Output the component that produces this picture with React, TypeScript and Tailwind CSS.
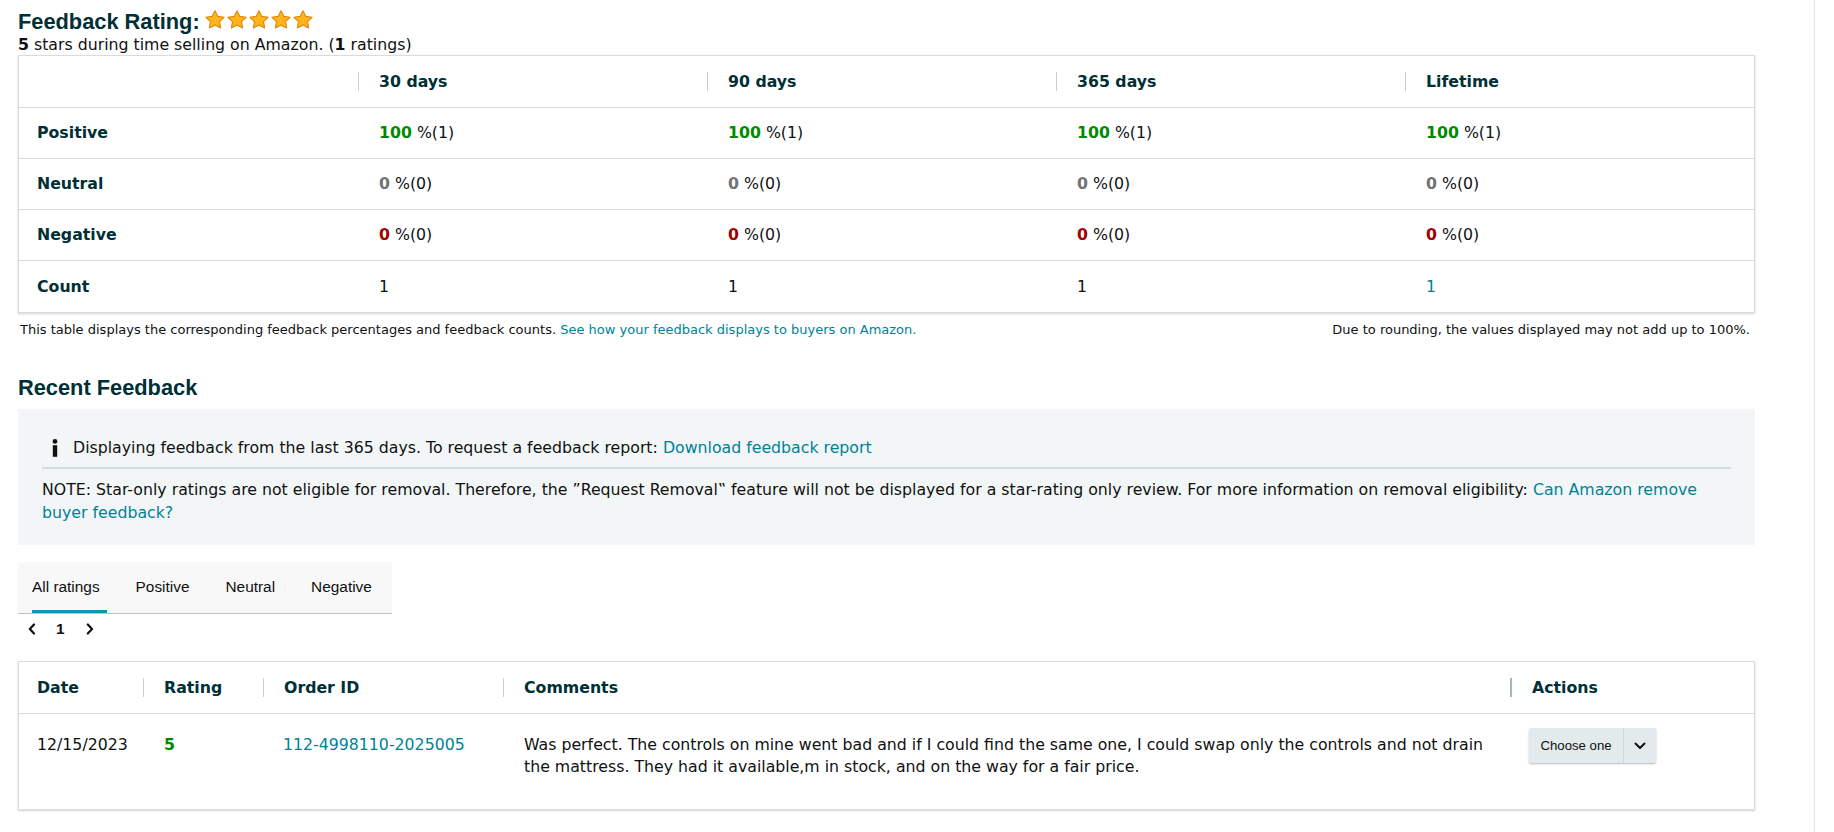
import React from "react";

const VERDANA = "font-['DejaVu_Sans','Verdana',sans-serif]";
const ARIAL = "font-['Liberation_Sans','Arial',sans-serif]";

function Star() {
  return (
    <svg width="20" height="19" viewBox="1 1.2 22 21" className="block">
      <polygon
        points="12,2 15.09,8.26 22,9.27 17,14.14 18.18,21.02 12,17.77 5.82,21.02 7,14.14 2,9.27 8.91,8.26"
        fill="#ffb31f"
        stroke="#e08600"
        strokeWidth="1.2"
        strokeLinejoin="round"
      />
    </svg>
  );
}

function InfoGlyph() {
  return (
    <svg width="6" height="18" viewBox="0 0 6 18" className="block">
      <circle cx="3" cy="2.4" r="2.4" fill="#0f1111" />
      <rect x="0.8" y="6.2" width="4.4" height="11.6" fill="#0f1111" />
    </svg>
  );
}

function Chevron({ dir }: { dir: "left" | "right" | "down" }) {
  if (dir === "down") {
    return (
      <svg width="12" height="8" viewBox="0 0 12 8" className="block">
        <polyline points="1.5,1.5 6,6 10.5,1.5" fill="none" stroke="#0f1111" strokeWidth="2" strokeLinecap="round" strokeLinejoin="round" />
      </svg>
    );
  }
  const pts = dir === "left" ? "6,1.5 1.8,6 6,10.5" : "1.8,1.5 6,6 1.8,10.5";
  return (
    <svg width="8" height="12" viewBox="0 0 8 12" className="block">
      <polyline points={pts} fill="none" stroke="#0f1111" strokeWidth="2.2" strokeLinecap="round" strokeLinejoin="round" />
    </svg>
  );
}

type Cell = { num: string; tone: "green" | "gray" | "red" | "plain" | "link"; rest: string };

const summary: { label: string; cells: Cell[] }[] = [
  {
    label: "Positive",
    cells: Array(4).fill({ num: "100", tone: "green", rest: " %(1)" }),
  },
  {
    label: "Neutral",
    cells: Array(4).fill({ num: "0", tone: "gray", rest: " %(0)" }),
  },
  {
    label: "Negative",
    cells: Array(4).fill({ num: "0", tone: "red", rest: " %(0)" }),
  },
  {
    label: "Count",
    cells: [
      { num: "1", tone: "plain", rest: "" },
      { num: "1", tone: "plain", rest: "" },
      { num: "1", tone: "plain", rest: "" },
      { num: "1", tone: "link", rest: "" },
    ],
  },
];

function Num({ c }: { c: Cell }) {
  if (c.tone === "plain") return <span className="text-[#0f1111]">{c.num}</span>;
  if (c.tone === "link") return <span className="text-[#008296]">{c.num}</span>;
  const color =
    c.tone === "green" ? "text-[#008a00]" : c.tone === "red" ? "text-[#a30000]" : "text-[#6f7373]";
  return (
    <span>
      <span className={`font-bold ${color}`}>{c.num}</span>
      <span className="text-[#0f1111]">{c.rest}</span>
    </span>
  );
}

function HeadCell({ children, first, thick }: { children?: React.ReactNode; first?: boolean; thick?: boolean }) {
  return (
    <div className={`flex h-full items-center ${first ? "pl-[18px]" : "pl-[21px]"}`}>
      {!first && (
        <div className={`-ml-[21px] mr-[20px] h-[19px] ${thick ? "w-[2px] bg-[#aab7b8]" : "w-px bg-[#c9cfcf]"}`} />
      )}
      <span className="font-bold text-[#002f36]">{children}</span>
    </div>
  );
}

function SummaryTable() {
  return (
    <div className="w-[1737px] border border-[#d9dcdd] bg-white shadow-[0_1px_2px_rgba(0,0,0,0.18)]">
      <div className="grid h-[52px] grid-cols-[339px_1fr_1fr_1fr_1fr] border-b border-[#d9dcdd]">
        <HeadCell first />
        <HeadCell>30 days</HeadCell>
        <HeadCell>90 days</HeadCell>
        <HeadCell>365 days</HeadCell>
        <HeadCell>Lifetime</HeadCell>
      </div>
      {summary.map((r, i) => (
        <div
          key={r.label}
          className={`grid h-[51px] grid-cols-[339px_1fr_1fr_1fr_1fr] items-center ${
            i < summary.length - 1 ? "border-b border-[#d9dcdd]" : ""
          }`}
        >
          <div className="pl-[18px] font-bold text-[#002f36]">{r.label}</div>
          {r.cells.map((c, j) => (
            <div key={j} className="pl-[21px]">
              <Num c={c} />
            </div>
          ))}
        </div>
      ))}
    </div>
  );
}

function FeedbackTable() {
  return (
    <div className="w-[1737px] border border-[#d9dcdd] bg-white shadow-[0_1px_2px_rgba(0,0,0,0.18)]">
      <div className="grid h-[52px] grid-cols-[124px_120px_240px_1007px_1fr] border-b border-[#d9dcdd]">
        <HeadCell first>Date</HeadCell>
        <HeadCell>Rating</HeadCell>
        <HeadCell>Order ID</HeadCell>
        <HeadCell>Comments</HeadCell>
        <HeadCell thick>Actions</HeadCell>
      </div>
      <div className="grid h-[95px] grid-cols-[124px_120px_240px_1007px_1fr] items-start text-[#0f1111]">
        <div className="pl-[18px] pt-[20px]">12/15/2023</div>
        <div className="pl-[21px] pt-[20px] font-bold text-[#008a00]">5</div>
        <div className="pl-[20px] pt-[20px] text-[#008296]">112-4998110-2025005</div>
        <div className="pl-[21px] pr-[16px] pt-[20px]">
          Was perfect. The controls on mine went bad and if I could find the same one, I could swap only the
          controls and not drain the mattress. They had it available,m in stock, and on the way for a fair price.
        </div>
        <div className="pl-[19px] pt-[14px]">
          <div
            className={`flex h-[35px] w-[127px] items-stretch rounded-[2px] bg-[#e3eaeb] shadow-[0_1px_2px_rgba(0,0,0,0.28)] ${ARIAL} text-[13.2px] text-[#0f1111]`}
          >
            <div className="flex w-[94px] items-center justify-center">Choose one</div>
            <div className="w-px bg-[#cfd6d7]" />
            <div className="flex flex-1 items-center justify-center">
              <Chevron dir="down" />
            </div>
          </div>
        </div>
      </div>
    </div>
  );
}

export default function App() {
  const tabs = ["All ratings", "Positive", "Neutral", "Negative"];
  return (
    <div className={`flex min-h-[832px] w-full bg-white ${VERDANA} text-[15.75px] leading-[22px] text-[#0f1111]`}>
      <div className="min-h-[832px] w-[1815px] shrink-0 border-r border-[#e3e5e6]">
        <div className="w-[1755px] pl-[18px] pt-[9px]">
          {/* heading with star rating */}
          <div className="flex h-[26px] items-start">
            <h1 className={`${ARIAL} text-[21.8px] font-bold leading-[26px] text-[#002f36]`}>Feedback Rating:</h1>
            <div className="ml-[5px] flex gap-[2px] pt-[1px]">
              {[0, 1, 2, 3, 4].map((i) => (
                <Star key={i} />
              ))}
            </div>
          </div>
          <div className="h-[20px] leading-[20px] text-[#0f1111]">
            <span className="font-bold">5</span> stars during time selling on Amazon. (
            <span className="font-bold">1</span> ratings)
          </div>

          <SummaryTable />

          <div className="mt-[9px] flex w-[1737px] justify-between pl-[2px] pr-[5px] text-[13px] leading-[16px] text-[#0f1111]">
            <div>
              This table displays the corresponding feedback percentages and feedback counts.{" "}
              <span className="text-[#008296]">See how your feedback displays to buyers on Amazon.</span>
            </div>
            <div>Due to rounding, the values displayed may not add up to 100%.</div>
          </div>

          <h2 className={`mt-[37px] ${ARIAL} text-[21.8px] font-bold leading-[26px] text-[#002f36]`}>Recent Feedback</h2>

          {/* info banner */}
          <div className="mt-[8px] w-[1737px] bg-[#f3f6f6] px-[24px] pb-[21px] pt-[28px]">
            <div className="flex items-center pl-[10px]">
              <InfoGlyph />
              <span className="ml-[15px]">
                Displaying feedback from the last 365 days. To request a feedback report:{" "}
                <span className="text-[#008296]">Download feedback report</span>
              </span>
            </div>
            <div className="mt-[8px] h-[2px] bg-[#d5dbdb]" />
            <div className="mt-[10px] leading-[22.5px]">
              NOTE: Star-only ratings are not eligible for removal. Therefore, the ”Request Removal‟ feature will not be
              displayed for a star-rating only review. For more information on removal eligibility:{" "}
              <span className="text-[#008296]">Can Amazon remove buyer feedback?</span>
            </div>
          </div>

          {/* rating tabs */}
          <div className={`mt-[17px] flex h-[52px] w-[374px] gap-[29px] border-b border-[#bcc1c1] bg-[#f8f8f8] pl-[14px] ${ARIAL} text-[15.4px] text-[#0f1111]`}>
            {tabs.map((t, i) => (
              <div
                key={t}
                className={`flex h-[51px] items-center border-b-[3px] pr-[7px] pt-[2px] ${
                  i === 0 ? "border-[#0a9aab]" : "border-transparent"
                }`}
              >
                {t}
              </div>
            ))}
          </div>

          {/* pager */}
          <div className={`flex h-[30px] items-center pl-[10px] ${ARIAL}`}>
            <Chevron dir="left" />
            <span className="ml-[20px] text-[15.4px] font-bold text-[#0f1111]">1</span>
            <span className="ml-[21px]">
              <Chevron dir="right" />
            </span>
          </div>

          <div className="mt-[17px]">
            <FeedbackTable />
          </div>
        </div>
      </div>
    </div>
  );
}
